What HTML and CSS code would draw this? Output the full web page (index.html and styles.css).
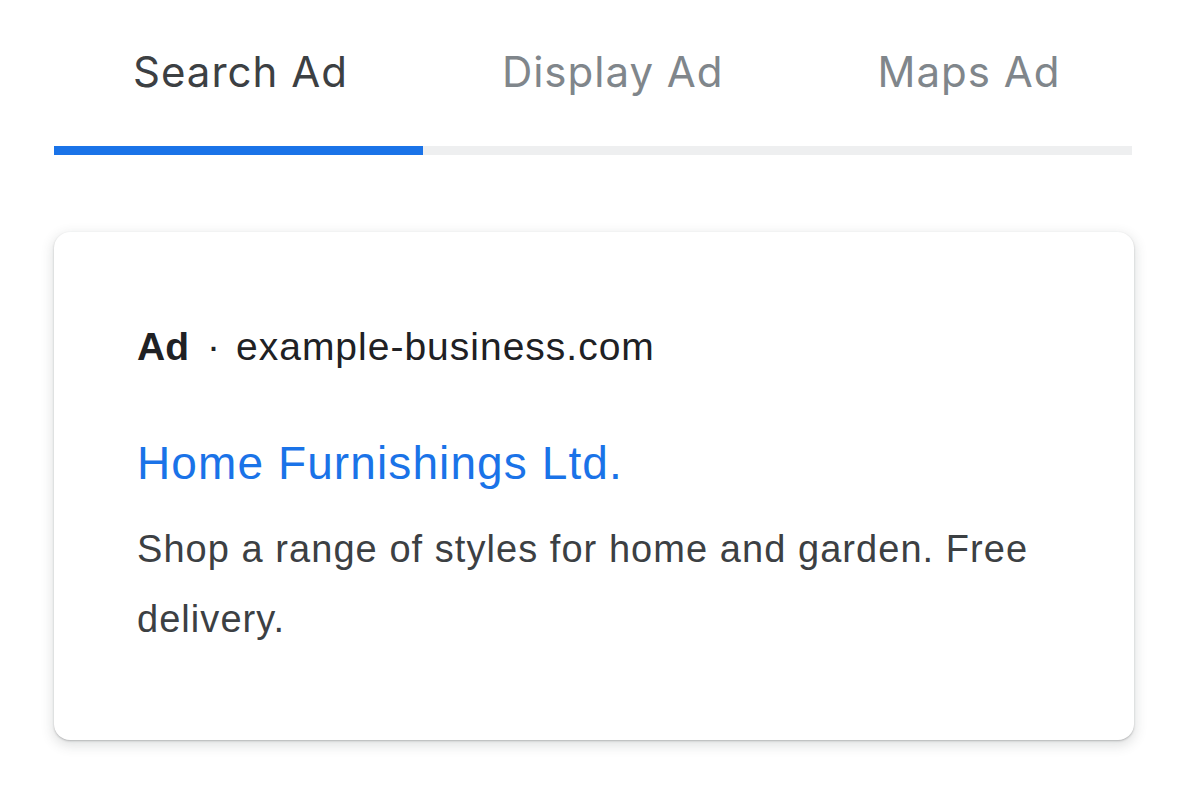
FILE: index.html
```html
<!DOCTYPE html>
<html>
<head>
<meta charset="utf-8">
<link rel="stylesheet" href="styles.css">
</head>
<body>
<div class="page">
  <div class="tabs">
    <div class="tab active">Search Ad</div>
    <div class="tab">Display Ad</div>
    <div class="tab">Maps Ad</div>
  </div>
  <div class="card">
    <div class="meta"><span class="ad">Ad</span><span class="dot">·</span><span class="url">example-business.com</span></div>
    <div class="title">Home Furnishings Ltd.</div>
    <div class="desc">Shop a range of styles for home and garden. Free delivery.</div>
  </div>
</div>
</body>
</html>
```
FILE: styles.css
```css
html, body {
  margin: 0;
  padding: 0;
  background: #ffffff;
}
body {
  font-family: "Liberation Sans", Arial, sans-serif;
  width: 1200px;
  height: 798px;
  overflow: hidden;
}
.page {
  padding: 40px 0 0 54px;
  width: 1080px;
}
.tabs {
  display: flex;
  width: 1078px;
  border-bottom: 9px solid #eeeff0;
}
.tab {
  font-family: Inter, "Open Sans", sans-serif;
  padding: 6px 75px 48px 79px;
  font-size: 42px;
  line-height: 52px;
  letter-spacing: 1px;
  color: #80868b;
  margin-bottom: -9px;
  border-bottom: 9px solid transparent;
  white-space: nowrap;
}
.tab.active {
  color: #3c4043;
  border-bottom-color: #1a73e8;
}
.card {
  margin-top: 77px;
  width: 1080px;
  height: 508px;
  box-sizing: border-box;
  border-radius: 16px;
  background: #fff;
  box-shadow: 0 1px 2px rgba(60,64,67,0.3), 0 4px 12px 2px rgba(60,64,67,0.15);
  padding: 93px 83px 0;
}
.meta {
  font-size: 39px;
  line-height: 44px;
  color: #202124;
  display: flex;
  align-items: baseline;
}
.ad {
  font-weight: 700;
}
.dot {
  margin: 0 16px 0 18px;
}
.url {
  letter-spacing: 1px;
}
.title {
  margin-top: 69px;
  font-size: 46px;
  line-height: 50px;
  letter-spacing: 1.1px;
  color: #1a73e8;
}
.desc {
  margin-top: 26px;
  font-size: 38px;
  line-height: 70px;
  letter-spacing: 1.05px;
  color: #3c4043;
  width: 920px;
}
```
